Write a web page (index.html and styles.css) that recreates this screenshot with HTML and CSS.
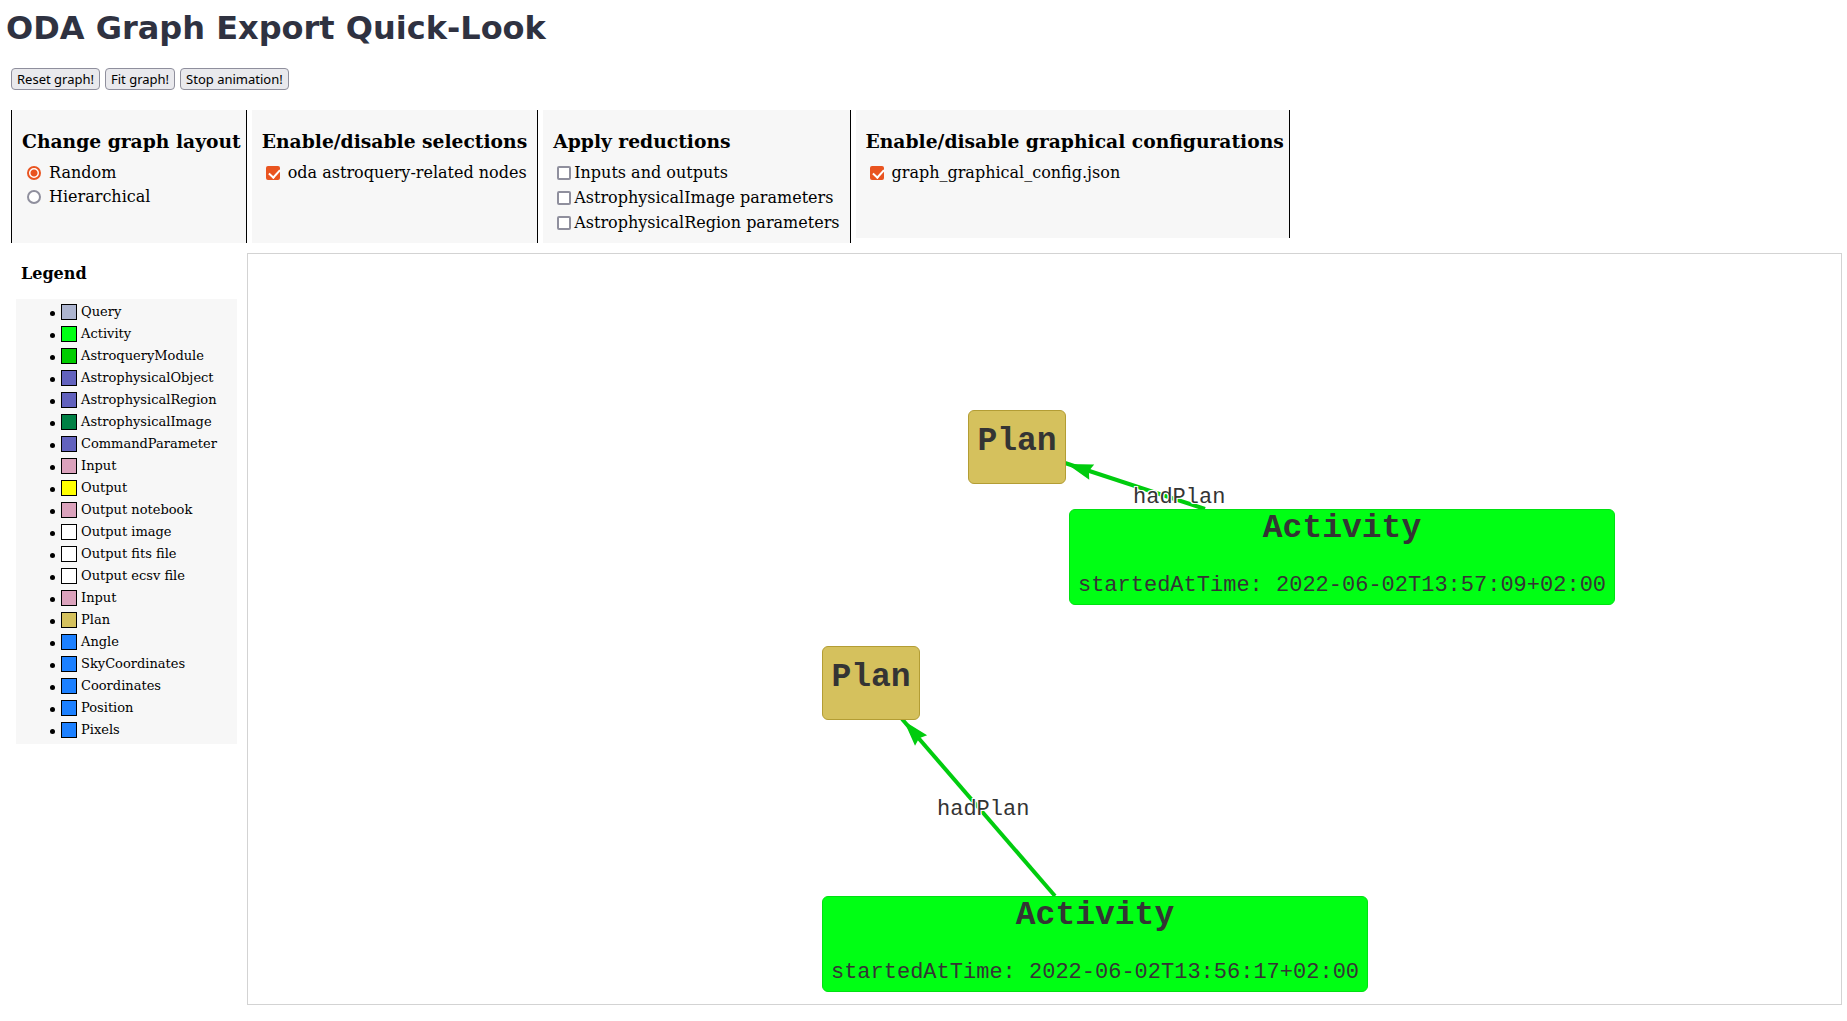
FILE: index.html
```
<!DOCTYPE html>
<html lang="en">
<head>
<meta charset="utf-8">
<title>ODA Graph Export Quick-Look</title>
<link rel="stylesheet" href="styles.css">
</head>
<body>
<h1 class="title">ODA Graph Export Quick-Look</h1>
<div class="toolbar">
  <button type="button" class="btn">Reset graph!</button>
  <button type="button" class="btn">Fit graph!</button>
  <button type="button" class="btn">Stop animation!</button>
</div>
<div class="panels">
  <section class="panel panel-first">
    <h3 class="panel-title">Change graph layout</h3>
    <div class="options options-layout">
      <label class="option"><input type="radio" name="layout" checked>Random</label>
      <label class="option"><input type="radio" name="layout">Hierarchical</label>
    </div>
  </section>
  <section class="panel panel-wide">
    <h3 class="panel-title">Enable/disable selections</h3>
    <div class="options">
      <label class="option"><input type="checkbox" checked>oda astroquery-related nodes</label>
    </div>
  </section>
  <section class="panel panel-wide">
    <h3 class="panel-title">Apply reductions</h3>
    <div class="options">
      <label class="option option-tight"><input type="checkbox">Inputs and outputs</label>
      <label class="option option-tight"><input type="checkbox">AstrophysicalImage parameters</label>
      <label class="option option-tight"><input type="checkbox">AstrophysicalRegion parameters</label>
    </div>
  </section>
  <section class="panel panel-config">
    <h3 class="panel-title">Enable/disable graphical configurations</h3>
    <div class="options">
      <label class="option"><input type="checkbox" checked>graph_graphical_config.json</label>
    </div>
  </section>
</div>
<main class="content">
  <aside class="legend">
    <h4 class="legend-title">Legend</h4>
    <ul class="legend-list">
      <li><span class="swatch query"></span>Query</li>
      <li><span class="swatch activity"></span>Activity</li>
      <li><span class="swatch module"></span>AstroqueryModule</li>
      <li><span class="swatch astro"></span>AstrophysicalObject</li>
      <li><span class="swatch astro"></span>AstrophysicalRegion</li>
      <li><span class="swatch image"></span>AstrophysicalImage</li>
      <li><span class="swatch astro"></span>CommandParameter</li>
      <li><span class="swatch input"></span>Input</li>
      <li><span class="swatch output"></span>Output</li>
      <li><span class="swatch input"></span>Output notebook</li>
      <li><span class="swatch file"></span>Output image</li>
      <li><span class="swatch file"></span>Output fits file</li>
      <li><span class="swatch file"></span>Output ecsv file</li>
      <li><span class="swatch input"></span>Input</li>
      <li><span class="swatch plan"></span>Plan</li>
      <li><span class="swatch coord"></span>Angle</li>
      <li><span class="swatch coord"></span>SkyCoordinates</li>
      <li><span class="swatch coord"></span>Coordinates</li>
      <li><span class="swatch coord"></span>Position</li>
      <li><span class="swatch coord"></span>Pixels</li>
    </ul>
  </aside>
  <div class="graph">
    <svg class="edges" width="1590" height="750" aria-hidden="true">
      <g stroke="#00cc0e" stroke-width="4">
        <path d="M957 255L817 209"/>
        <path d="M807 642L654 465"/>
      </g>
      <g fill="#00cc0e">
        <path d="M0 0L26 -8L23 0L26 8Z" transform="translate(819 210) rotate(18)"/>
        <path d="M0 0L26 -8L23 0L26 8Z" transform="translate(656 467) rotate(49)"/>
      </g>
    </svg>
    <span class="edge-label edge-a">hadPlan</span>
    <span class="edge-label edge-b">hadPlan</span>
    <div class="node node-plan plan-a">Plan</div>
    <div class="node node-activity activity-a">Activity<span class="detail">startedAtTime: 2022-06-02T13:57:09+02:00</span></div>
    <div class="node node-plan plan-b">Plan</div>
    <div class="node node-activity activity-b">Activity<span class="detail">startedAtTime: 2022-06-02T13:56:17+02:00</span></div>
  </div>
</main>
</body>
</html>
```
FILE: styles.css
```
* { box-sizing: border-box; }

body {
  margin: 0;
  padding: 9px 5px 16px 6px;
  background: #fff;
  color: #000;
  font: 16px/20px "DejaVu Serif", serif;
}

.title {
  margin: 0;
  color: #2f3241;
  font: bold 32px/38px "DejaVu Sans", sans-serif;
}

.toolbar {
  display: flex;
  gap: 5px;
  margin: 21px 5px 20px;
}

.btn {
  height: 22px;
  padding: 0 5px;
  border: 1px solid #8f8f9d;
  border-radius: 4px;
  background: #e9e9ed;
  color: #000;
  font: 13px/20px "Noto Sans", sans-serif;
}

.panels {
  display: flex;
  align-items: flex-start;
  gap: 5px;
  padding-left: 5px;
}

.panel {
  min-height: 133px;
  padding: 20px 5px 5px 10px;
  border-right: 1px solid #000;
  background: #f7f7f7;
}

.panel-first { border-left: 1px solid #000; }
.panel-wide { padding-right: 10px; }
.panel-config { min-height: 128px; }

.panel-title {
  margin: 0 0 11px;
  line-height: 22px;
}

.options {
  display: grid;
  gap: 5px;
  padding-left: 4px;
}

.options-layout {
  gap: 4px;
  padding-left: 5px;
}

.option {
  display: flex;
  align-items: center;
  gap: 8px;
}

.option-tight { gap: 3px; }

input {
  appearance: none;
  flex: none;
  width: 14px;
  height: 14px;
  margin: 0;
  border: 2px solid #8f8f9d;
  border-radius: 2px;
  background: #fff;
}

input[type="radio"] { border-radius: 50%; }

input[type="radio"]:checked {
  border-color: #e95420;
  background: radial-gradient(circle, #e95420 3px, #fff 4px);
}

input[type="checkbox"]:checked {
  border: 0;
  background: #e95420;
}

input[type="checkbox"]:checked::after {
  content: "";
  display: block;
  width: 5px;
  height: 9px;
  margin: 1px 0 0 5px;
  border: solid #fff;
  border-width: 0 2px 2px 0;
  transform: rotate(42deg);
}

.content {
  display: flex;
  margin-top: 10px;
}

.legend {
  flex: none;
  width: 241px;
  padding: 11px 10px 0;
}

.legend-title {
  margin: 0 0 15px 5px;
}

.legend-list {
  margin: 0;
  padding: 2px 0 3px 34px;
  background: #f7f7f7;
  font-size: 13px;
  line-height: 22px;
  list-style: none;
}

.legend-list li {
  display: flex;
  align-items: center;
}

.legend-list li::before {
  content: "";
  width: 5px;
  height: 5px;
  margin: 2px 6px 0 0;
  border-radius: 50%;
  background: #000;
}

.swatch {
  width: 16px;
  height: 16px;
  margin-right: 4px;
  border: 1px solid #000;
}

.query { background: #adb5d0; }
.activity { background: #00ff14; }
.module { background: #00cc00; }
.astro { background: #6262be; }
.image { background: #008045; }
.input { background: #dba2bc; }
.output { background: #ffff00; }
.file { background: #fff; }
.plan { background: #d5c15d; }
.coord { background: #1c80ff; }

.graph {
  position: relative;
  flex: 1;
  height: 752px;
  overflow: hidden;
  border: 1px solid #d3d3d3;
  color: #343434;
  font-family: "Liberation Mono", monospace;
}

.edges {
  position: absolute;
  left: 0;
  top: 0;
}

.node {
  position: absolute;
  border: 1px solid;
  border-radius: 6px;
  font-size: 33px;
  font-weight: bold;
  line-height: 38px;
  text-align: center;
}

.node-plan {
  width: 98px;
  height: 74px;
  padding-top: 12px;
  border-color: #b39d34;
  background: #d5c15d;
}

.node-activity {
  width: 546px;
  height: 96px;
  border-color: #00e012;
  background: #00ff14;
}

.detail {
  display: block;
  margin-top: 20px;
  font-size: 22px;
  font-weight: normal;
  line-height: 36px;
}

.plan-a { left: 720px; top: 156px; }
.activity-a { left: 821px; top: 255px; }
.plan-b { left: 574px; top: 392px; }
.activity-b { left: 574px; top: 642px; }

.edge-label {
  position: absolute;
  font-size: 22px;
  line-height: 26px;
  text-shadow: 1px 1px 0 #fff, -1px -1px 0 #fff, 1px -1px 0 #fff, -1px 1px 0 #fff;
}

.edge-a { left: 885px; top: 231px; }
.edge-b { left: 689px; top: 543px; }
```
